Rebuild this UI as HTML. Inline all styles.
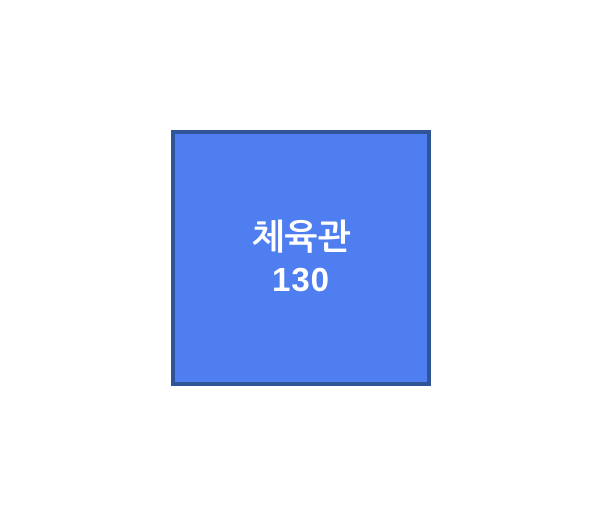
<!DOCTYPE html>
<html><head><meta charset="utf-8"><style>
html,body{margin:0;padding:0;background:#fff;width:599px;height:532px;overflow:hidden}
.box{position:absolute;left:171px;top:130px;width:252px;height:248px;border:4px solid #2f5597;background:#4f7ef0;}
.t{position:absolute;left:171px;width:260px;text-align:center;color:#fff;font-weight:bold;font-family:"Liberation Sans","NanumGothic","Noto Sans CJK KR",sans-serif;}
.a{font-size:35px;line-height:40px;top:218px}
.b{font-size:33px;line-height:40px;top:260px;letter-spacing:1px}
</style></head><body>
<div class="box"></div>
<div class="t a">체육관</div>
<div class="t b">130</div>
</body></html>
